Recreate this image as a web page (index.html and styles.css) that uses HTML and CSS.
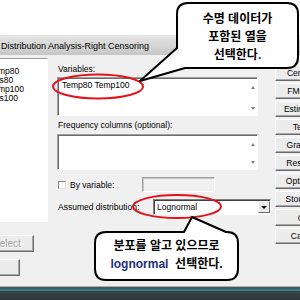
FILE: index.html
```html
<!DOCTYPE html>
<html lang="ko">
<head>
    <meta charset="UTF-8">
    <title>Distribution Analysis-Right Censoring</title>
    <link rel="stylesheet" href="styles.css">
</head>
<body>
    <div class="screen">
        <div class="desk"></div>
        <div class="titlebar">Distribution Analysis-Right Censoring</div>

        <div class="dialog">
            <div class="left">
                <div class="list">
                    <div class="item"><span class="cn">C1</span>Temp80</div>
                    <div class="item"><span class="cn cens">C2</span>Cens80</div>
                    <div class="item"><span class="cn">C3</span>Temp100</div>
                    <div class="item"><span class="cn cens">C4</span>Cens100</div>
                </div>
                <button class="btn select" disabled>Select</button>
                <button class="btn help">Help</button>
            </div>

            <div class="main">
                <div class="lbl">Variables:</div>
                <div class="box vars">
                    <div class="val">Temp80 Temp100</div>
                    <div class="sbar"><i class="up"></i><i class="down"></i></div>
                </div>

                <div class="lbl freq-lbl">Frequency columns (optional):</div>
                <div class="box freq">
                    <div class="val"></div>
                    <div class="sbar"><i class="up"></i><i class="down"></i></div>
                </div>

                <div class="byrow">
                    <label class="chk"><span class="check"></span>By variable:</label>
                    <div class="field"></div>
                </div>

                <div class="distrow">
                    <span>Assumed distribution:</span>
                    <div class="combo">
                        <span class="choice">Lognormal</span>
                        <span class="drop"><i></i></span>
                    </div>
                </div>
            </div>

            <div class="side">
                <button class="btn">Censor...</button>
                <button class="btn">FMode...</button>
                <button class="btn">Estimate...</button>
                <button class="btn">Test...</button>
                <button class="btn">Graphs...</button>
                <button class="btn">Results...</button>
                <button class="btn">Options...</button>
                <button class="btn">Storage...</button>
                <button class="btn ok">OK</button>
                <button class="btn">Cancel</button>
            </div>
        </div>

        <div class="taskbar"></div>

        <!-- red marks and speech bubbles drawn over the dialog -->
        <svg class="marks" width="300" height="300" viewBox="0 0 300 300">
            <ellipse cx="98" cy="86.5" rx="45" ry="12" fill="none" stroke="#e3121b" stroke-width="2"/>
            <ellipse cx="177" cy="206.5" rx="44" ry="11.5" fill="none" stroke="#e3121b" stroke-width="2"/>
            <path d="M188,3 H287 Q298,3 298,14 V57 Q298,68 287,68 H185 L140,81 L177,48 V14 Q177,3 188,3 Z"
                  fill="#fff" stroke="#000" stroke-width="2" stroke-linejoin="round"/>
            <path d="M106,232 H184 L192,217 L226,232 H227 Q238,232 238,243 V269 Q238,280 227,280 H106 Q95,280 95,269 V243 Q95,232 106,232 Z"
                  fill="#fff" stroke="#000" stroke-width="2" stroke-linejoin="round"/>
        </svg>

        <div class="tip tip-top">수명 데이터가<br>포함된 열을<br>선택한다<span class="en">.</span></div>
        <div class="tip tip-bottom">분포를 알고 있으므로<br><span class="en">lognormal</span>&nbsp; 선택한다.</div>
    </div>
</body>
</html>
```

FILE: styles.css
```css
* {
    box-sizing: border-box;
}
body {
    margin: 0;
    font-family: "Liberation Sans", Arial, sans-serif;
    font-size: 8.5px;
    background: #fff;
    color: #000;
}
.screen {
    position: relative;
    width: 300px;
    height: 300px;
    overflow: hidden;
    display: flex;
    flex-direction: column;
}
.desk {
    flex: none;
    height: 35px;
}
.titlebar {
    flex: none;
    height: 20px;
    padding: 2px 0 0 1px;
    line-height: 18px;
    font-size: 9px;
    white-space: nowrap;
    background: linear-gradient(#e6e6e6, #c6c6c6);
}
.dialog {
    flex: none;
    display: flex;
    height: 231px;
    width: 373px;
    margin-left: -40px;
    padding-top: 3px;
    background: #f0f0f0;
}

/* left column */
.left {
    width: 88px;
    display: flex;
    flex-direction: column;
}
.list {
    height: 164px;
    padding: 8px 0 0 3px;
    background: #fff;
    border: 1px solid;
    border-color: #a0a0a0 #fff #fff #a0a0a0;
}
.item {
    line-height: 9px;
    white-space: nowrap;
}
.cn {
    display: inline-block;
    width: 25px;
}
.cn.cens {
    width: 20px;
}

/* buttons */
.btn {
    font-family: "Liberation Sans", Arial, sans-serif;
    font-size: 8.5px;
    padding: 0;
    height: 16px;
    background: #ececec;
    border: 1px solid;
    border-color: #fff #6a6a6a #6a6a6a #fff;
    box-shadow: inset -1px -1px #a8a8a8;
    color: #000;
    white-space: nowrap;
}
.select {
    align-self: flex-end;
    width: 54px;
    height: 17px;
    margin: 13px 14px 0 0;
    font-size: 10px;
    color: #a0a0a0;
    text-shadow: 1px 1px #fff;
}
.help {
    align-self: flex-end;
    width: 60px;
    height: 17px;
    margin: 7px 28px 0 0;
}

/* middle column */
.main {
    width: 213px;
    margin-left: 9px;
    padding-top: 6px;
}
.lbl {
    line-height: 11px;
    padding-left: 1px;
}
.box {
    display: flex;
    width: 201px;
    background: #fff;
    border: 1px solid;
    border-color: #a0a0a0 #fff #fff #a0a0a0;
    box-shadow: inset 1px 1px #6a6a6a;
}
.vars {
    height: 39px;
    margin-top: 2px;
}
.freq-lbl {
    margin-top: 4px;
}
.freq {
    height: 36px;
    margin-top: 3px;
}
.val {
    flex: 1;
    padding: 2px 4px;
    line-height: 11px;
}
.sbar {
    width: 9px;
    display: flex;
    flex-direction: column;
    justify-content: space-between;
    align-items: center;
    padding: 8px 0 5px;
}
.up, .down {
    width: 0;
    height: 0;
    border-left: 2.5px solid transparent;
    border-right: 2.5px solid transparent;
}
.up {
    border-bottom: 3px solid #808080;
}
.down {
    border-top: 3px solid #808080;
}

.byrow {
    display: grid;
    grid-template-columns: 85px 73px;
    align-items: center;
    height: 15px;
    margin-top: 7px;
}
.chk {
    display: flex;
    align-items: center;
    gap: 4px;
    padding-left: 1px;
}
.check {
    width: 8px;
    height: 8px;
    background: #fff;
    border: 1px solid;
    border-color: #808080 #e0e0e0 #e0e0e0 #808080;
}
.field {
    height: 15px;
    border: 1px solid;
    border-color: #a0a0a0 #fff #fff #a0a0a0;
    box-shadow: inset 1px 1px #c8c8c8;
}

.distrow {
    display: grid;
    grid-template-columns: 95px 118px;
    align-items: center;
    height: 16px;
    margin-top: 7px;
    padding-left: 1px;
}
.combo {
    display: flex;
    height: 16px;
    background: #fff;
    border: 1px solid;
    border-color: #808080 #fff #fff #808080;
    box-shadow: inset 1px 1px #404040;
}
.choice {
    flex: 1;
    padding: 2px 0 0 3px;
    line-height: 11px;
}
.drop {
    width: 12px;
    margin: 1px 0;
    display: flex;
    align-items: center;
    justify-content: center;
    background: #ececec;
    border: 1px solid;
    border-color: #fff #6a6a6a #6a6a6a #fff;
}
.drop i {
    width: 0;
    height: 0;
    border-left: 3px solid transparent;
    border-right: 3px solid transparent;
    border-top: 3px solid #000;
}

/* right column */
.side {
    width: 58px;
    margin-left: 5px;
    padding-top: 7px;
    display: flex;
    flex-direction: column;
}
.side .btn + .btn {
    margin-top: 2px;
}
.side .ok {
    margin-top: 33px;
    height: 17px;
}

.taskbar {
    flex: none;
    height: 14px;
    background: linear-gradient(#a8b0b0 0, #a8b0b0 1px, #4b5557 1px, #4b5557 3px, #2e8290 3px, #2e8290 5px, #3a4446 5px, #2f3839 100%);
}

/* overlays */
.marks {
    position: absolute;
    left: 0;
    top: 0;
}
.tip {
    position: absolute;
    text-align: center;
    font-family: "Liberation Sans", "Noto Sans CJK KR", sans-serif;
    font-weight: bold;
    font-size: 12px;
    white-space: nowrap;
}
.tip-top {
    left: 177px;
    top: 10px;
    width: 121px;
    line-height: 18px;
}
.tip-bottom {
    left: 95px;
    top: 238px;
    width: 143px;
    line-height: 17.5px;
}
.en {
    color: #1f2f7a;
}
```
